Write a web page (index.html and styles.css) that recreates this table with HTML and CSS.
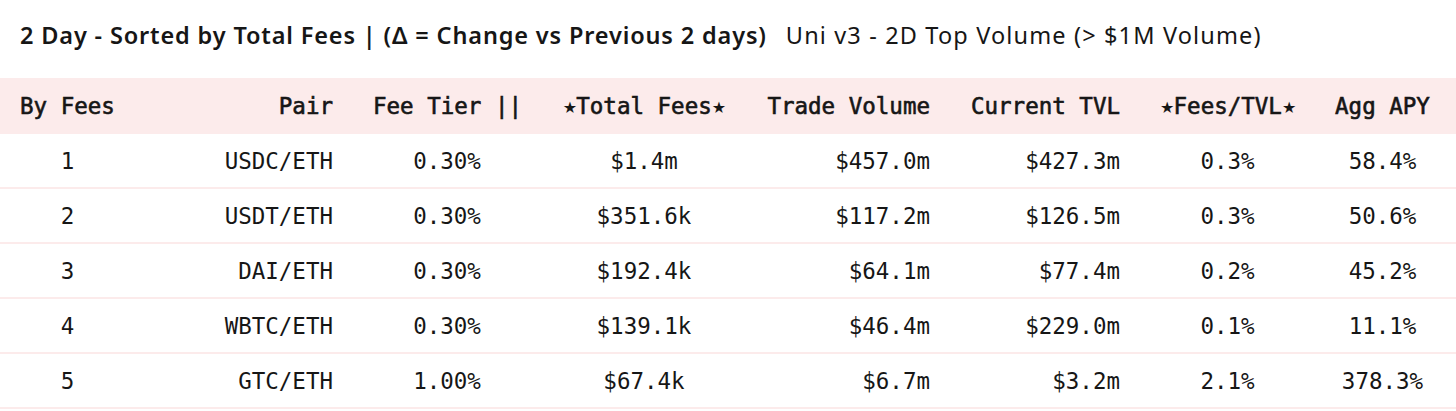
FILE: index.html
```html
<!DOCTYPE html>
<html>
<head>
<meta charset="utf-8">
<link rel="stylesheet" href="styles.css">
</head>
<body>
<div class="page">
  <div class="titlebar">
    <span class="title">2 Day - Sorted by Total Fees | (Δ = Change vs Previous 2 days)</span>
    <span class="subtitle">Uni v3 - 2D Top Volume (&gt; $1M Volume)</span>
  </div>
  <div class="table">
    <div class="row head">
      <div class="c center">By Fees</div>
      <div class="c right">Pair</div>
      <div class="c center">Fee Tier ||</div>
      <div class="c center"><span class="star">★</span>Total Fees<span class="star">★</span></div>
      <div class="c right">Trade Volume</div>
      <div class="c right">Current TVL</div>
      <div class="c center"><span class="star">★</span>Fees/TVL<span class="star">★</span></div>
      <div class="c center last">Agg APY</div>
    </div>
    <div class="row">
      <div class="c center">1</div>
      <div class="c right">USDC/ETH</div>
      <div class="c center">0.30%</div>
      <div class="c center">$1.4m</div>
      <div class="c right">$457.0m</div>
      <div class="c right">$427.3m</div>
      <div class="c center">0.3%</div>
      <div class="c center last">58.4%</div>
    </div>
    <div class="row">
      <div class="c center">2</div>
      <div class="c right">USDT/ETH</div>
      <div class="c center">0.30%</div>
      <div class="c center">$351.6k</div>
      <div class="c right">$117.2m</div>
      <div class="c right">$126.5m</div>
      <div class="c center">0.3%</div>
      <div class="c center last">50.6%</div>
    </div>
    <div class="row">
      <div class="c center">3</div>
      <div class="c right">DAI/ETH</div>
      <div class="c center">0.30%</div>
      <div class="c center">$192.4k</div>
      <div class="c right">$64.1m</div>
      <div class="c right">$77.4m</div>
      <div class="c center">0.2%</div>
      <div class="c center last">45.2%</div>
    </div>
    <div class="row">
      <div class="c center">4</div>
      <div class="c right">WBTC/ETH</div>
      <div class="c center">0.30%</div>
      <div class="c center">$139.1k</div>
      <div class="c right">$46.4m</div>
      <div class="c right">$229.0m</div>
      <div class="c center">0.1%</div>
      <div class="c center last">11.1%</div>
    </div>
    <div class="row">
      <div class="c center">5</div>
      <div class="c right">GTC/ETH</div>
      <div class="c center">1.00%</div>
      <div class="c center">$67.4k</div>
      <div class="c right">$6.7m</div>
      <div class="c right">$3.2m</div>
      <div class="c center">2.1%</div>
      <div class="c center last">378.3%</div>
    </div>
  </div>
</div>
</body>
</html>
```

FILE: styles.css
```css
html, body {
  margin: 0;
  padding: 0;
  background: #ffffff;
}

.page {
  width: 1456px;
  color: #161616;
}

.titlebar {
  display: flex;
  align-items: baseline;
  gap: 19px;
  padding: 20px 20px 0 20px;
  height: 58px;
  box-sizing: border-box;
  font-family: "Noto Sans", "Open Sans", sans-serif;
  font-size: 23.5px;
  line-height: 30px;
  white-space: nowrap;
}

.title {
  font-weight: 600;
  letter-spacing: 0.85px;
}

.subtitle {
  font-weight: 400;
  letter-spacing: 1.15px;
}

.table {
  font-family: "DejaVu Sans Mono", "Liberation Mono", monospace;
  font-size: 22.5px;
}

.row {
  display: grid;
  grid-template-columns: 135px 218px 188px 206px 203px 190px 175px 141px;
  height: 55px;
  box-sizing: border-box;
  border-bottom: 2px solid #fcebeb;
  align-items: center;
}

.row.head {
  margin-top: 20px;
  height: 56px;
  background: #fcebeb;
  border-bottom: none;
  -webkit-text-stroke: 0.6px #161616;
}

.star {
  display: inline-block;
  width: 13.55px;
  text-align: center;
  font-family: "DejaVu Sans", sans-serif;
  font-size: 16px;
  vertical-align: 1px;
  -webkit-text-stroke: 0;
}

.c {
  padding: 0 20px;
  white-space: nowrap;
}

.c.last {
  padding-right: 26px;
}

.center {
  text-align: center;
}

.right {
  text-align: right;
}
```
